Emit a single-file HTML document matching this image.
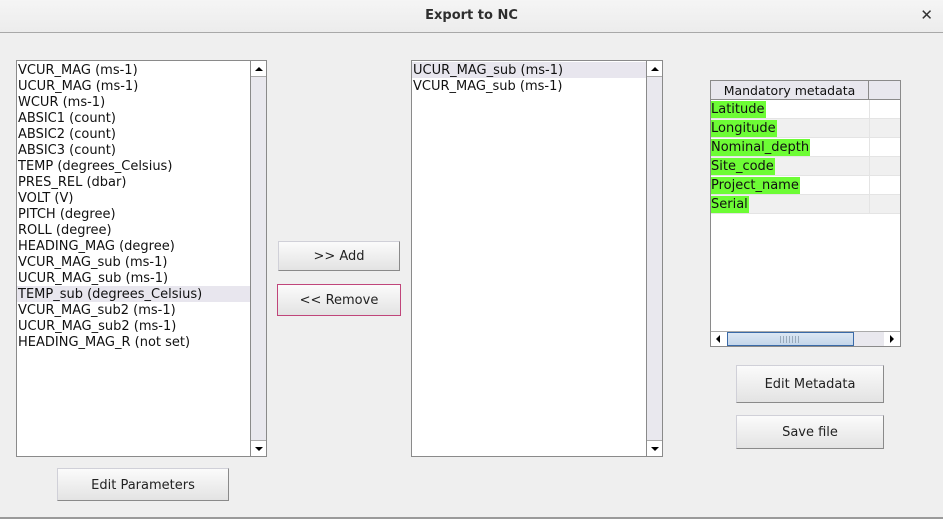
<!DOCTYPE html>
<html><head><meta charset="utf-8"><style>
*{box-sizing:border-box;margin:0;padding:0}
body{width:943px;height:519px;background:#efefef;font-family:"DejaVu Sans","Liberation Sans",sans-serif;font-size:12px;color:#111;position:relative;overflow:hidden}
.title{position:absolute;left:0;top:0;width:943px;height:33px;background:linear-gradient(#f5f5f5,#ececec);border-bottom:1px solid #a8a8a8}
.title b{position:absolute;left:0;width:943px;top:8px;text-align:center;font-size:13px;color:#2e2e2e}
.x{position:absolute;right:10px;top:6px;font-size:15px;font-weight:bold;color:#333}
.list{position:absolute;background:#fff;border:1px solid #8a8a8a;font-size:13px;padding-top:1px}
.row{height:16px;line-height:17px;padding-left:1px;white-space:nowrap}
.sel{background:#e8e6ee}
.vs{position:absolute;right:0;top:0;bottom:0;width:16px;background:#e9e8ee;border-left:1px solid #8a8a8a}
.ab{position:absolute;left:0;width:15px;height:16px;background:#fff;border-bottom:1px solid #aaa}
.ab.d{bottom:0;border-top:1px solid #aaa;border-bottom:none}
.tri{position:absolute;left:4px;width:0;height:0;border-left:4px solid transparent;border-right:4px solid transparent}
.btn{position:absolute;background:linear-gradient(#fbfbfb,#e3e3e3);border:1px solid #d0d0d8;border-right-color:#8a8a8a;border-bottom-color:#8a8a8a;text-align:center;font-size:13px;color:#222}
.t{position:absolute;left:710px;top:80px;width:191px;height:267px;background:#fff;border:1px solid #8a8a8a;font-size:12.5px}
.th{position:absolute;top:0;height:19px;line-height:19px;background:#e8e7ee;border-bottom:1px solid #8a8a8a;text-align:center}
.tr{position:absolute;left:0;width:189px;height:19px;border-bottom:1px solid #e4e4e4}
.tr span{background:#6dfc35;line-height:17px;display:inline-block;padding-right:1px;margin-top:1px;font-size:13px}
</style></head><body>
<div class="title"><b>Export to NC</b><span class="x">✕</span></div>
<div style="position:absolute;left:0;right:0;top:517px;height:2px;background:#9a9a9a"></div>

<div class="list" style="left:16px;top:60px;width:251px;height:397px">
<div class="row">VCUR_MAG (ms-1)</div><div class="row">UCUR_MAG (ms-1)</div><div class="row">WCUR (ms-1)</div><div class="row">ABSIC1 (count)</div><div class="row">ABSIC2 (count)</div><div class="row">ABSIC3 (count)</div><div class="row">TEMP (degrees_Celsius)</div><div class="row">PRES_REL (dbar)</div><div class="row">VOLT (V)</div><div class="row">PITCH (degree)</div><div class="row">ROLL (degree)</div><div class="row">HEADING_MAG (degree)</div><div class="row">VCUR_MAG_sub (ms-1)</div><div class="row">UCUR_MAG_sub (ms-1)</div><div class="row sel" style="margin-right:16px">TEMP_sub (degrees_Celsius)</div><div class="row">VCUR_MAG_sub2 (ms-1)</div><div class="row">UCUR_MAG_sub2 (ms-1)</div><div class="row">HEADING_MAG_R (not set)</div>
<div class="vs"><div class="ab" style="top:0"><div class="tri" style="top:6px;border-bottom:4px solid #000"></div></div><div class="ab d"><div class="tri" style="top:6px;border-top:4px solid #000"></div></div></div>
</div>

<div class="list" style="left:411px;top:60px;width:252px;height:397px">
<div class="row sel" style="margin-right:16px">UCUR_MAG_sub (ms-1)</div><div class="row">VCUR_MAG_sub (ms-1)</div>
<div class="vs"><div class="ab" style="top:0"><div class="tri" style="top:6px;border-bottom:4px solid #000"></div></div><div class="ab d"><div class="tri" style="top:6px;border-top:4px solid #000"></div></div></div>
</div>

<div class="btn" style="left:278px;top:241px;width:122px;height:30px;line-height:30px">&gt;&gt; Add</div>
<div class="btn" style="left:277px;top:284px;width:124px;height:32px;line-height:32px;border:1px solid #c0457a">&lt;&lt; Remove</div>
<div class="btn" style="left:57px;top:468px;width:172px;height:33px;line-height:33px">Edit Parameters</div>
<div class="btn" style="left:736px;top:365px;width:148px;height:38px;line-height:38px">Edit Metadata</div>
<div class="btn" style="left:736px;top:415px;width:148px;height:34px;line-height:34px">Save file</div>

<div class="t">
<div class="th" style="left:0;width:158px;border-right:1px solid #8a8a8a">Mandatory metadata</div>
<div class="th" style="left:158px;width:31px"></div>
<div class="tr" style="top:19px;background:#fff"><span>Latitude</span></div>
<div class="tr" style="top:38px;background:#f0f0f0"><span>Longitude</span></div>
<div class="tr" style="top:57px;background:#fff"><span>Nominal_depth</span></div>
<div class="tr" style="top:76px;background:#f0f0f0"><span>Site_code</span></div>
<div class="tr" style="top:95px;background:#fff"><span>Project_name</span></div>
<div class="tr" style="top:114px;background:#f0f0f0"><span>Serial</span></div>
<div style="position:absolute;left:158px;top:19px;width:1px;height:114px;background:#e4e4e4"></div>
<div style="position:absolute;left:0;bottom:0;width:189px;height:15px;background:#e9e8ee;border-top:1px solid #aaa">
 <div style="position:absolute;left:0;top:0;width:16px;height:14px;background:#fff"><div style="position:absolute;left:5px;top:3px;border-top:4px solid transparent;border-bottom:4px solid transparent;border-right:4px solid #000"></div></div>
 <div style="position:absolute;left:16px;top:0;width:127px;height:14px;background:linear-gradient(#dce7f3,#c4d6ea);border:1px solid #3a6aa8"><div style="position:absolute;left:52px;top:3px;width:20px;height:7px;background:repeating-linear-gradient(90deg,#9ab 0 1px,transparent 1px 3px)"></div></div>
 <div style="position:absolute;right:0;top:0;width:16px;height:14px;background:#fff"><div style="position:absolute;left:6px;top:3px;border-top:4px solid transparent;border-bottom:4px solid transparent;border-left:4px solid #000"></div></div>
</div>
</div>
</body></html>
